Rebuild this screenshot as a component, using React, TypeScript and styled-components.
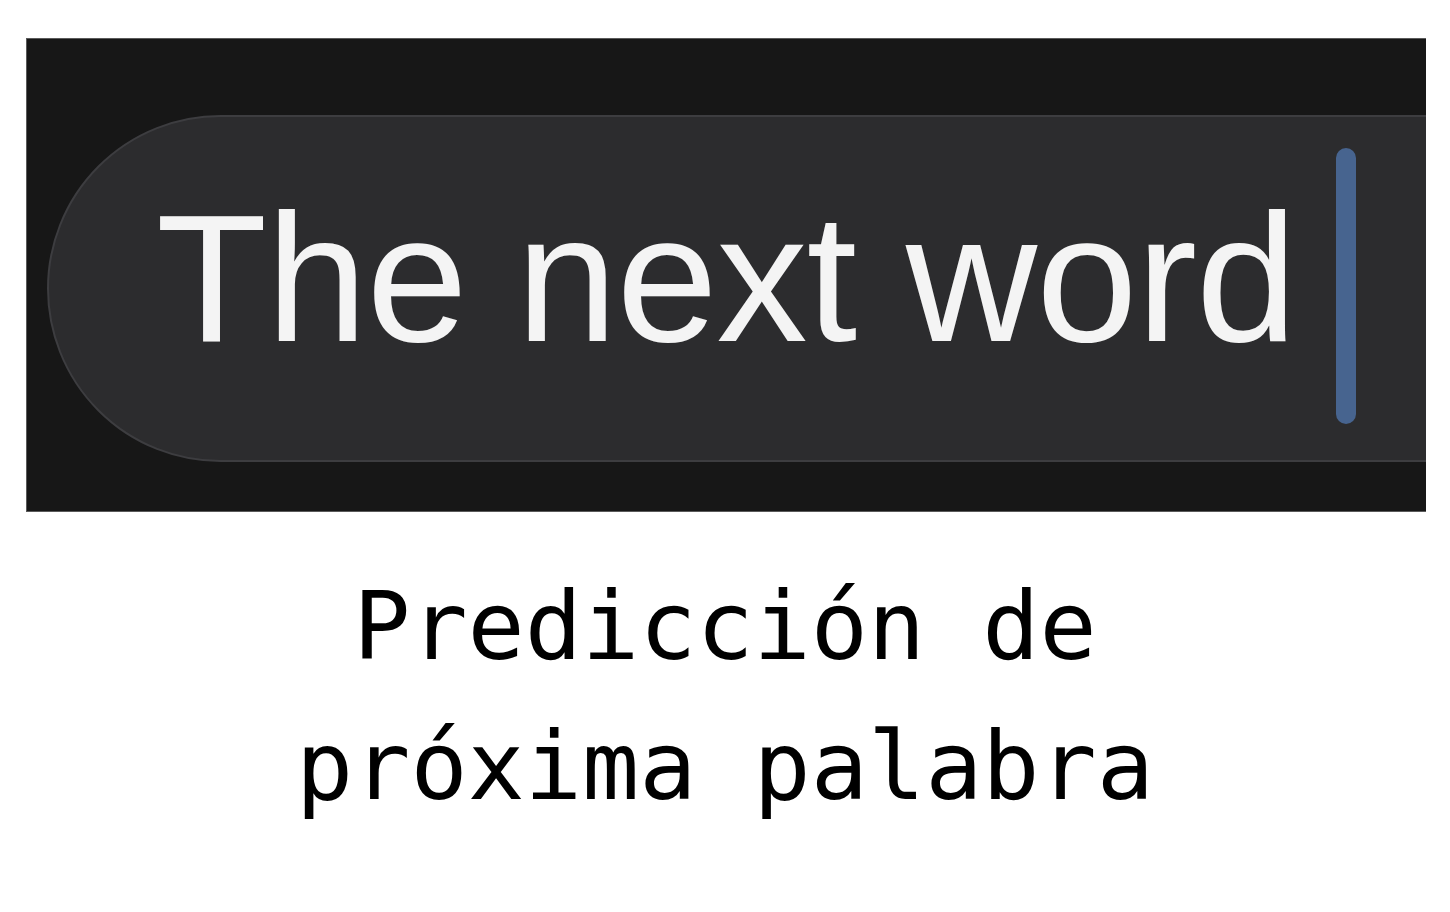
import React from "react";
import styled, { createGlobalStyle } from "styled-components";

const Global = createGlobalStyle`
  html, body { margin: 0; padding: 0; background: #ffffff; }
  body { width: 1450px; height: 912px; overflow: hidden; }
`;

const Page = styled.div`
  display: flex;
  flex-direction: column;
  align-items: stretch;
  padding: 38px 24px 0 26px;
`;

const Panel = styled.div`
  width: 1400px;
  height: 474px;
  box-sizing: border-box;
  background: #171717;
  border: 1px solid #5a5a5a;
  border-right: none;
  overflow: hidden;
  padding: 76px 0 0 20px;
`;

const Pill = styled.div`
  width: 1900px;
  height: 347px;
  box-sizing: border-box;
  background: #2c2c2e;
  border: 2px solid #3d3d40;
  border-radius: 174px;
  display: flex;
  align-items: center;
  padding-left: 107px;
  gap: 40px;
`;

const InputText = styled.span`
  font-family: "Liberation Sans", Arial, sans-serif;
  font-size: 182px;
  color: #f4f4f4;
  letter-spacing: -1px;
  white-space: nowrap;
  line-height: 1;
  margin-top: -22px;
`;

const Caret = styled.div`
  width: 20px;
  height: 276px;
  border-radius: 10px;
  background: #47648f;
  margin-top: -6px;
`;

const Caption = styled.div`
  margin-top: 44px;
  margin-left: -26px;
  width: 1450px;
  text-align: center;
  font-family: "DejaVu Sans Mono", "Liberation Mono", monospace;
  font-size: 95px;
  line-height: 140px;
  color: #000;
`;

export default function App() {
  return (
    <>
      <Global />
      <Page>
        <Panel>
          <Pill>
            <InputText>The next word</InputText>
            <Caret />
          </Pill>
        </Panel>
        <Caption>
          Predicción de
          <br />
          próxima palabra
        </Caption>
      </Page>
    </>
  );
}
